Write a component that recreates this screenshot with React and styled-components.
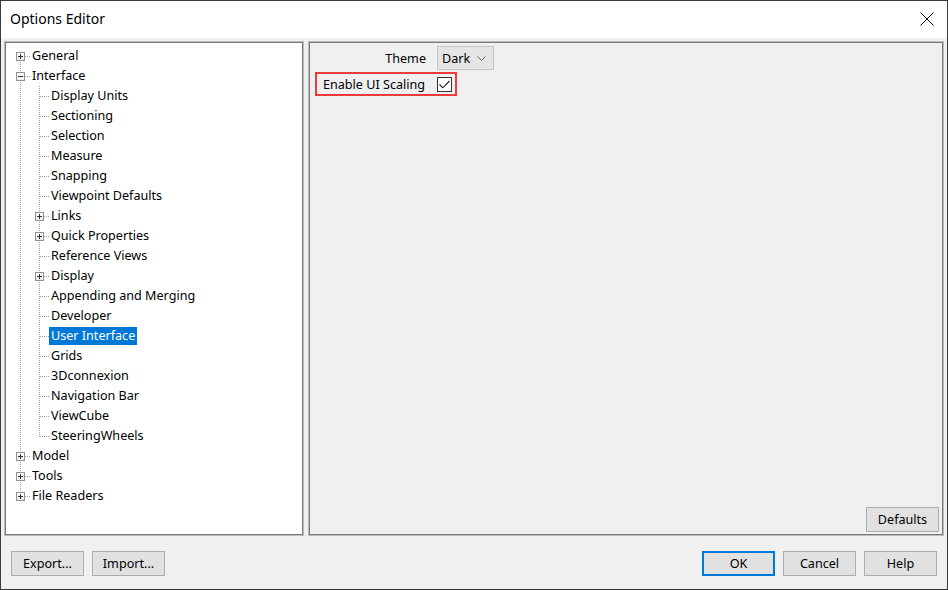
import React from "react";
import styled, { createGlobalStyle } from "styled-components";

const GlobalStyle = createGlobalStyle`
  html, body { margin: 0; padding: 0; background: #f0f0f0; }
  body { font-family: "Noto Sans", "Open Sans", sans-serif; color: #000; }
  * { box-sizing: border-box; }
`;

const Window = styled.div`
  width: 948px;
  height: 590px;
  border: 1px solid #3a3a3a;
  display: flex;
  flex-direction: column;
  background: #f0f0f0;
  overflow: hidden;
`;

const TitleBar = styled.div`
  height: 37px;
  flex: none;
  background: #fff;
  display: flex;
  align-items: center;
  justify-content: space-between;
  padding: 0 13px 2px 9px;
`;

const Title = styled.div`
  font-size: 14px;
  color: #000;
`;

const CloseBtn = styled.div`
  width: 14px;
  height: 14px;
  display: flex;
`;

const Body = styled.div`
  flex: 1;
  display: flex;
  flex-direction: column;
  padding: 3px 3px 0 3px;
`;

const Panels = styled.div`
  height: 495px;
  display: flex;
  gap: 4px;
`;

const Sunken = styled.div`
  border: 1px solid #bcbcbc;
  box-shadow: inset 0 0 0 1px #7a7a7a;
`;

const TreePanel = styled(Sunken)`
  width: 300px;
  background: #fff;
  padding: 4px 0 0 6px;
  font-size: 12.6px;
`;

const Row = styled.div`
  display: flex;
  height: 20px;
  align-items: stretch;
`;

const Cell = styled.div`
  width: 19px;
  flex: none;
  position: relative;
`;

const VLine = styled.div`
  position: absolute;
  left: 9px;
  width: 1px;
  top: ${(p) => (p.$from === "mid" ? "10px" : "0")};
  height: ${(p) => (p.$to === "mid" ? "11px" : p.$from === "mid" ? "10px" : "20px")};
  background: repeating-linear-gradient(to bottom, #a0a0a0 0 1px, transparent 1px 2px);
`;

const HLine = styled.div`
  position: absolute;
  left: 10px;
  right: 0;
  top: 10px;
  height: 1px;
  background: repeating-linear-gradient(to right, #a0a0a0 0 1px, transparent 1px 2px);
`;

const Expander = styled.div`
  position: absolute;
  left: 5px;
  top: 6px;
  width: 9px;
  height: 9px;
  border: 1px solid #919191;
  background: linear-gradient(#ffffff, #ececec);
  z-index: 1;
  &::before {
    content: "";
    position: absolute;
    left: 1px;
    top: 3px;
    width: 5px;
    height: 1px;
    background: #26354f;
  }
  &::after {
    content: "";
    display: ${(p) => (p.$open ? "none" : "block")};
    position: absolute;
    left: 3px;
    top: 1px;
    width: 1px;
    height: 5px;
    background: #26354f;
  }
`;

const Label = styled.div`
  height: 18px;
  margin-top: 1px;
  line-height: 18px;
  padding: 0 2px;
  white-space: nowrap;
  background: ${(p) => (p.$selected ? "#0078d7" : "transparent")};
  color: ${(p) => (p.$selected ? "#fff" : "#000")};
`;

const RightPanel = styled(Sunken)`
  flex: 1;
  background: #f0f0f0;
  display: flex;
  flex-direction: column;
  padding: 4px 4px 3px 6px;
  font-size: 12.6px;
`;

const FormRow = styled.div`
  display: flex;
  align-items: center;
  height: 24px;
`;

const FieldLabel = styled.div`
  width: 122px;
  text-align: right;
  padding-right: 11px;
`;

const Select = styled.div`
  width: 57px;
  height: 24px;
  background: #e5e5e5;
  border: 1px solid #c4c4c4;
  display: flex;
  align-items: center;
  justify-content: space-between;
  padding: 0 7px 0 4px;
`;

const Highlight = styled.div`
  margin-top: 2px;
  align-self: flex-start;
  display: flex;
  align-items: center;
  height: 24px;
  border: 2px solid #ef3b3b;
  padding-right: 3px;
`;

const CheckLabel = styled.div`
  width: 120px;
  padding-left: 6px;
`;

const Checkbox = styled.div`
  width: 15px;
  height: 15px;
  border: 1px solid #333;
  background: #fff;
  display: flex;
  align-items: center;
  justify-content: center;
`;

const Spacer = styled.div`
  flex: 1;
`;

const Button = styled.div`
  width: 73px;
  height: 25px;
  flex: none;
  display: flex;
  align-items: center;
  justify-content: center;
  background: #e1e1e1;
  border: ${(p) => (p.$default ? "2px solid #0078d7" : "1px solid #adadad")};
  font-size: 12.6px;
  color: #000;
`;

const DefaultsButton = styled(Button)`
  align-self: flex-end;
`;

const Footer = styled.div`
  display: flex;
  align-items: center;
  gap: 8px;
  padding: 15px 7px 0 7px;
`;

const tree = [
  { label: "General", level: 0, exp: "plus", first: true },
  { label: "Interface", level: 0, exp: "minus" },
  { label: "Display Units", level: 1 },
  { label: "Sectioning", level: 1 },
  { label: "Selection", level: 1 },
  { label: "Measure", level: 1 },
  { label: "Snapping", level: 1 },
  { label: "Viewpoint Defaults", level: 1 },
  { label: "Links", level: 1, exp: "plus" },
  { label: "Quick Properties", level: 1, exp: "plus" },
  { label: "Reference Views", level: 1 },
  { label: "Display", level: 1, exp: "plus" },
  { label: "Appending and Merging", level: 1 },
  { label: "Developer", level: 1 },
  { label: "User Interface", level: 1, selected: true },
  { label: "Grids", level: 1 },
  { label: "3Dconnexion", level: 1 },
  { label: "Navigation Bar", level: 1 },
  { label: "ViewCube", level: 1 },
  { label: "SteeringWheels", level: 1, last: true },
  { label: "Model", level: 0, exp: "plus" },
  { label: "Tools", level: 0, exp: "plus" },
  { label: "File Readers", level: 0, exp: "plus", last: true },
];

function TreeRow({ item }) {
  return (
    <Row>
      {item.level === 1 && (
        <Cell>
          <VLine $from="top" $to="bottom" />
        </Cell>
      )}
      <Cell>
        <VLine $from={item.first ? "mid" : "top"} $to={item.last ? "mid" : "bottom"} />
        <HLine />
        {item.exp && <Expander $open={item.exp === "minus"} />}
      </Cell>
      <Label $selected={item.selected}>{item.label}</Label>
    </Row>
  );
}

export default function App() {
  return (
    <>
      <GlobalStyle />
      <Window>
        <TitleBar>
          <Title>Options Editor</Title>
          <CloseBtn>
            <svg width="14" height="14" viewBox="0 0 14 14">
              <path d="M0.5 0.5 L13.5 13.5 M13.5 0.5 L0.5 13.5" stroke="#000" strokeWidth="1" fill="none" />
            </svg>
          </CloseBtn>
        </TitleBar>
        <Body>
          <Panels>
            <TreePanel>
              {tree.map((item) => (
                <TreeRow key={item.label} item={item} />
              ))}
            </TreePanel>
            <RightPanel>
              <FormRow>
                <FieldLabel>Theme</FieldLabel>
                <Select>
                  <span>Dark</span>
                  <svg width="9" height="5" viewBox="0 0 9 5">
                    <path d="M0.5 0.5 L4.5 4.5 L8.5 0.5" stroke="#606060" strokeWidth="1" fill="none" />
                  </svg>
                </Select>
              </FormRow>
              <Highlight>
                <CheckLabel>Enable UI Scaling</CheckLabel>
                <Checkbox>
                  <svg width="11" height="9" viewBox="0 0 11 9">
                    <path d="M0.5 4.5 L3.8 7.8 L10.5 1" stroke="#222" strokeWidth="1.1" fill="none" />
                  </svg>
                </Checkbox>
              </Highlight>
              <Spacer />
              <DefaultsButton>Defaults</DefaultsButton>
            </RightPanel>
          </Panels>
          <Footer>
            <Button>Export...</Button>
            <Button>Import...</Button>
            <Spacer />
            <Button $default>OK</Button>
            <Button>Cancel</Button>
            <Button>Help</Button>
          </Footer>
        </Body>
      </Window>
    </>
  );
}
